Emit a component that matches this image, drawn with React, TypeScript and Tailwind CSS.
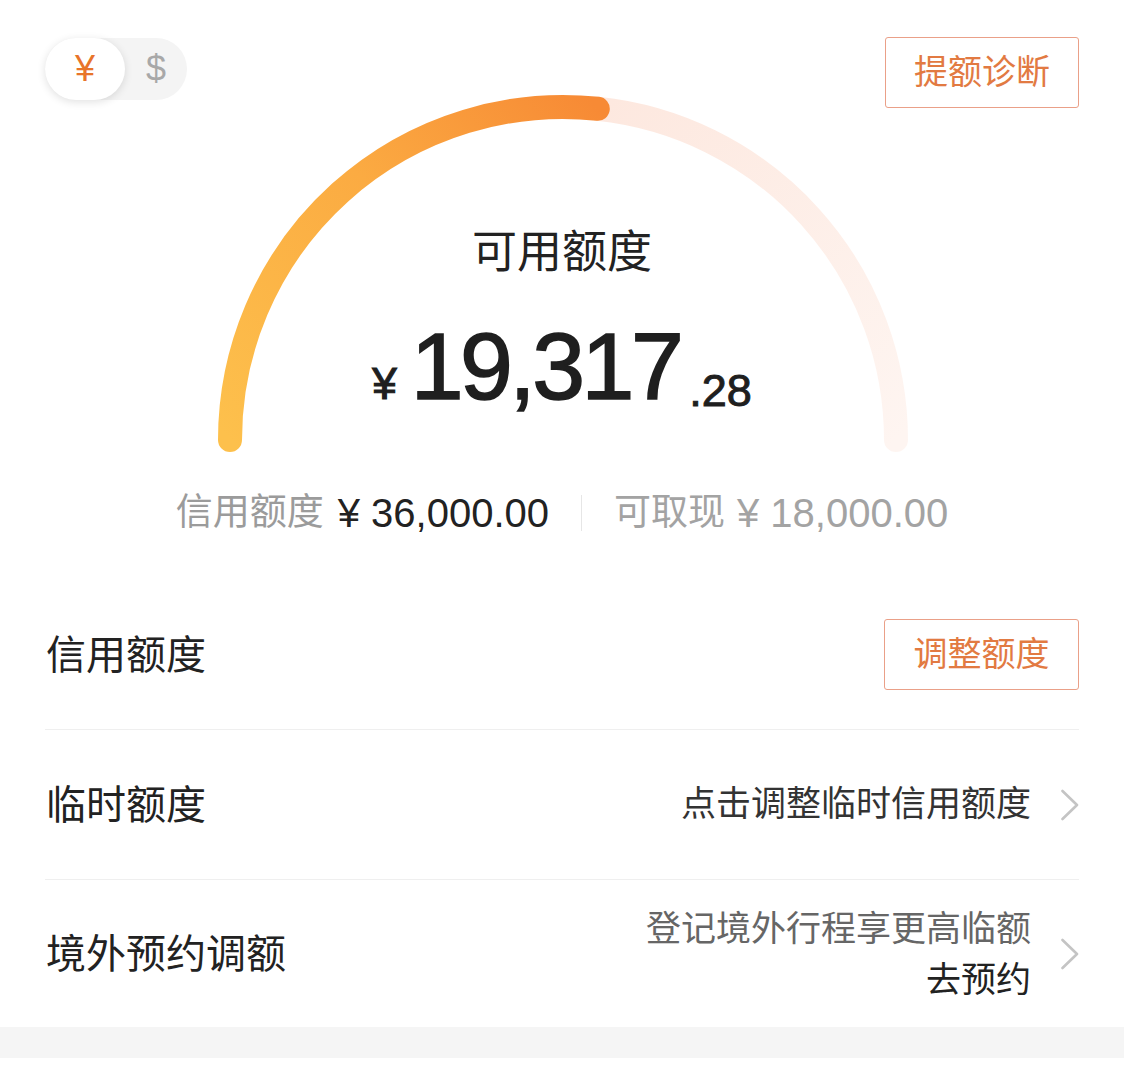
import React from 'react';

const font = { fontFamily: '"Liberation Sans", "Noto Sans CJK SC", sans-serif' };

function Chevron() {
  return (
    <svg width="18" height="32" viewBox="0 0 18 32" className="shrink-0">
      <path d="M1.5 2 L16 16 L1.5 30" fill="none" stroke="#c4c4c4" strokeWidth="2.6" strokeLinecap="round" strokeLinejoin="round" />
    </svg>
  );
}

function Gauge() {
  return (
    <svg width="1124" height="580" viewBox="0 0 1124 580" className="col-start-1 row-start-1">
      <defs>
        <linearGradient id="used" gradientUnits="userSpaceOnUse" x1="230" y1="440" x2="600" y2="110">
          <stop offset="0" stopColor="#fdc04c" />
          <stop offset="0.55" stopColor="#fbab42" />
          <stop offset="1" stopColor="#f78a35" />
        </linearGradient>
        <linearGradient id="track" gradientUnits="userSpaceOnUse" x1="600" y1="110" x2="896" y2="440">
          <stop offset="0" stopColor="#fde8df" />
          <stop offset="1" stopColor="#fef5f1" />
        </linearGradient>
      </defs>
      <path d="M 597.8 108.8 A 333 333 0 0 1 896 440" fill="none" stroke="url(#track)" strokeWidth="24" strokeLinecap="round" />
      <path d="M 230 440 A 333 333 0 0 1 597.8 108.8" fill="none" stroke="url(#used)" strokeWidth="24" strokeLinecap="round" />
    </svg>
  );
}

export default function App() {
  return (
    <div className="w-[1124px] h-[1080px] bg-white text-[#222]" style={font}>
      {/* Hero */}
      <div className="grid">
        <Gauge />
        <div className="col-start-1 row-start-1 flex flex-col">
          <div className="flex justify-between items-start px-[45px] pt-[37px]">
            <div className="mt-[1px] flex items-center w-[142px] h-[62px] rounded-full bg-[#f4f4f4]">
              <div className="w-[80px] h-[62px] rounded-full bg-white shadow-[0_2px_8px_rgba(0,0,0,0.12)] flex items-center justify-center text-[36px] text-[#e8742a]">
                ¥
              </div>
              <div className="flex-1 flex items-center justify-center text-[36px] text-[#a8a8a8]">$</div>
            </div>
            <button className="w-[194px] h-[71px] border border-[#eaa088] rounded-[3px] text-[34px] text-[#e27a42] flex items-center justify-center">
              提额诊断
            </button>
          </div>

          <div className="mt-[122px] text-center text-[45px] leading-[45px] text-[#222]">可用额度</div>

          <div className="mt-[43px] flex items-baseline justify-center text-[#1f1f1f]">
            <span className="text-[44px] leading-none mr-[14px] [-webkit-text-stroke:1.2px_#1f1f1f]">¥</span>
            <span className="text-[95px] leading-[96px] tracking-[-3.5px] [-webkit-text-stroke:1.6px_#1f1f1f]">19,317</span>
            <span className="text-[45px] leading-none ml-[9px] translate-y-[7px] [-webkit-text-stroke:1px_#1f1f1f]">.28</span>
          </div>

          <div className="mt-[79px] flex items-center justify-center text-[37px] leading-[40px]">
            <span className="text-[#9b9b9b]">信用额度</span>
            <span className="ml-[14px] text-[40px] text-[#222]">¥ 36,000.00</span>
            <span className="mx-[32px] w-px h-[36px] bg-[#e6e6e6]" />
            <span className="text-[#a3a3a3]">可取现</span>
            <span className="ml-[12px] text-[40px] text-[#a3a3a3]">¥ 18,000.00</span>
          </div>
        </div>
      </div>

      {/* Rows */}
      <div className="px-[45px]">
        <div className="h-[150px] flex items-center justify-between border-b border-[#efefef]">
          <span className="text-[40px] pl-px">信用额度</span>
          <button className="w-[195px] h-[71px] border border-[#eaa088] rounded-[3px] text-[34px] text-[#e27a42] flex items-center justify-center">
            调整额度
          </button>
        </div>
        <div className="h-[150px] flex items-center justify-between border-b border-[#efefef]">
          <span className="text-[40px] pl-px">临时额度</span>
          <div className="flex items-center gap-[30px]">
            <span className="text-[35px] text-[#333]">点击调整临时信用额度</span>
            <Chevron />
          </div>
        </div>
        <div className="h-[147px] flex items-center justify-between">
          <span className="text-[40px] pl-px">境外预约调额</span>
          <div className="flex items-center gap-[30px]">
            <div className="flex flex-col items-end text-[35px] leading-[51px]">
              <span className="text-[#666]">登记境外行程享更高临额</span>
              <span className="text-[#222]">去预约</span>
            </div>
            <Chevron />
          </div>
        </div>
      </div>
      <div className="h-[31px] bg-[#f5f5f5]" />
    </div>
  );
}
